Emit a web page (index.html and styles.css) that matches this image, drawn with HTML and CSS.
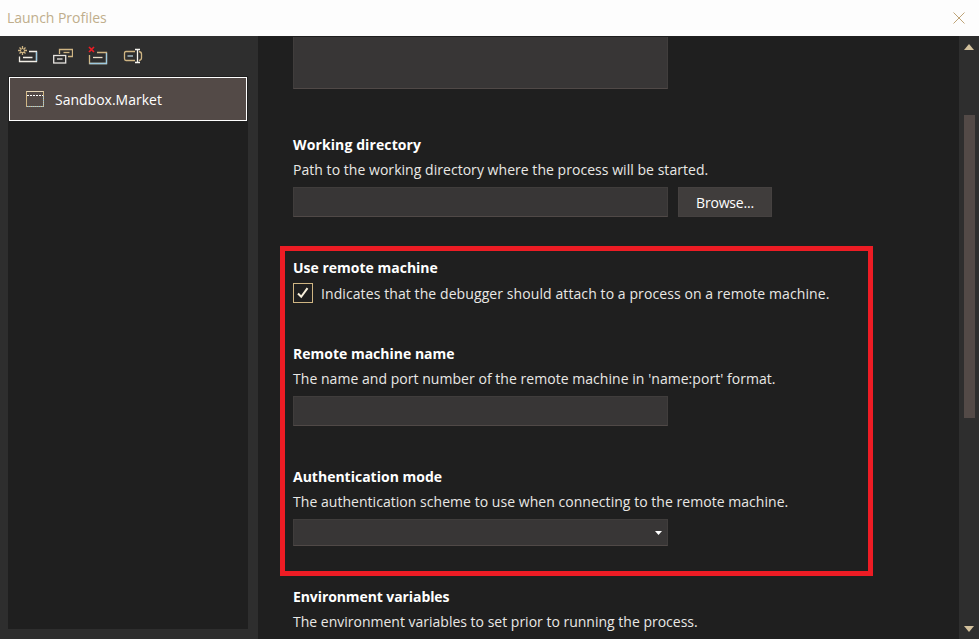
FILE: index.html
```html
<!DOCTYPE html>
<html lang="en">
<head>
<meta charset="utf-8">
<title>Launch Profiles</title>
<link rel="stylesheet" href="styles.css">
</head>
<body>
<div class="window">
  <header class="titlebar">
    <span class="title">Launch Profiles</span>
    <svg class="close" width="12" height="12" viewBox="0 0 12 12"><path d="M.5 .5l11 11M11.5 .5l-11 11"/></svg>
  </header>
  <div class="content">
    <aside class="sidebar">
      <div class="toolbar">
        <svg class="icon" width="20" height="20" viewBox="0 0 20 20"><path d="M11 5.500H18.500V15.500H1.500V10.500M5 11.500H14.500" stroke="#f2eee6"/><path d="M18.500 6V15" stroke="#9dc9e0"/><path d="M4.500 0V9M0 4.500H9M1.500 1.500L7.500 7.500M7.500 1.500L1.500 7.500" stroke="#cfb583"/><circle cx="4.500" cy="4.500" r="1.500" fill="#2e2e2e"/></svg>
        <svg class="icon" width="20" height="20" viewBox="0 0 20 20"><path d="M6.500 8V3.500H19.500V10.500H15" stroke="#cfb583"/><path d="M10.500 6.500H16.500" stroke="#cfb583"/><rect x=".7" y="9.500" width="12" height="7.500" stroke="#e6e3df"/><path d="M4 13H9.500" stroke="#e6e3df"/></svg>
        <svg class="icon" width="20" height="20" viewBox="0 0 20 20"><path d="M9 6.500H18.500V17.500H1.500V9" stroke="#cfb583"/><path d="M18.500 7V17.500H1.500" stroke="#9dc9e0"/><path d="M5 11.500H14.500" stroke="#e6ddc9"/><path d="M1 1L6 6M6 1L1 6" stroke="#ed1c24" stroke-width="1.700"/></svg>
        <svg class="icon" width="20" height="20" viewBox="0 0 20 20"><path d="M12 5.500H3Q1.500 5.500 1.500 7.500V12.500Q1.500 14.500 3 14.500H12M16 5.500Q18.500 6 18.500 8V12Q18.500 14 16 14.500" stroke="#cfb583"/><path d="M4.500 10H10" stroke="#b8d3df"/><path d="M14.500 3.500V16.500M12 3.500H17M12 16.500H17" stroke="#f7f5f0"/></svg>
      </div>
      <div class="profiles">
        <div class="profile">
          <svg class="icon" width="19" height="17" viewBox="0 0 19 17"><rect x=".5" y=".5" width="17" height="15" stroke="#cfb583"/><path d="M.5 .5H17.500" stroke="#e5d6b8"/><path d="M1 4.500H17" stroke="#fff" stroke-dasharray="2 1"/><path d="M17.500 5V15.500H1" stroke="#9dc9e0" stroke-dasharray="1 1"/></svg>
          <span class="profile-name">Sandbox.Market</span>
        </div>
      </div>
    </aside>
    <main class="settings">
      <div class="field arguments"></div>
      <section class="setting">
        <h2 class="t-wd">Working directory</h2>
        <p class="d-wd">Path to the working directory where the process will be started.</p>
        <div class="row"><div class="field"></div><button class="browse">Browse...</button></div>
      </section>
      <div class="highlight">
        <section class="setting">
          <h2>Use remote machine</h2>
          <label class="check-row"><span class="checkbox"><svg width="12" height="12" viewBox="0 0 12 12"><path d="M1 6.500L4.200 9.800L10.500 1.200"/></svg></span><span class="d-remote">Indicates that the debugger should attach to a process on a remote machine.</span></label>
        </section>
        <section class="setting">
          <h2>Remote machine name</h2>
          <p class="d-name">The name and port number of the remote machine in 'name:port' format.</p>
          <div class="field"></div>
        </section>
        <section class="setting">
          <h2>Authentication mode</h2>
          <p class="d-auth">The authentication scheme to use when connecting to the remote machine.</p>
          <div class="field select"><svg width="7" height="4" viewBox="0 0 7 4"><path d="M0 0H7L3.500 4Z"/></svg></div>
        </section>
      </div>
      <section class="setting">
        <h2 class="t-env">Environment variables</h2>
        <p>The environment variables to set prior to running the process.</p>
      </section>
    </main>
    <div class="scrollbar">
      <svg width="10" height="6" viewBox="0 0 10 6"><path d="M0 6L5 0L10 6Z"/></svg>
      <div class="thumb"></div>
      <svg width="10" height="6" viewBox="0 0 10 6"><path d="M0 0H10L5 6Z"/></svg>
    </div>
  </div>
</div>
</body>
</html>
```
FILE: styles.css
```css
* { box-sizing: border-box; }
body { margin: 0; overflow: hidden; font: 14px/20px "Open Sans", "Noto Sans", sans-serif; color: #e9e8e5; background: #1f1f1f; white-space: nowrap; }
.window { width: 979px; height: 639px; display: flex; flex-direction: column; }
.titlebar { height: 36px; flex: none; display: flex; align-items: center; justify-content: space-between; padding: 0 14px 1px 7px; background: #fdfdfd; color: #c0ae8c; }
.title { letter-spacing: -.03px; }
svg { display: block; flex: none; fill: none; }
.close { stroke: #bea478; }
.content { flex: 1; min-height: 0; display: flex; }
.sidebar { width: 258px; flex: none; display: flex; flex-direction: column; padding: 0 10px 10px 8px; background: #2e2e2e; }
.toolbar { height: 40px; flex: none; display: flex; gap: 15px; padding: 10px 0 0 10px; }
.toolbar .icon { stroke-width: 1.3; }
.profiles { flex: 1; background: #1f1f1f; padding: 1px 1px 0; }
.profile { height: 44px; display: flex; align-items: center; gap: 10px; padding-left: 16px; background: #534a47; border: 1px solid #fff; color: #fff; }
.profile-name { padding-top: 2px; }
.settings { flex: 1; min-width: 0; padding: 1px 0 0 35px; }
.field { width: 375px; height: 30px; flex: none; background: #383636; border: 1px solid #403d3c; border-bottom-color: #504947; }
.field.arguments { height: 52px; border-top: 0; margin-bottom: 46px; }
h2 { margin: 0 0 5px; font-size: 14px; line-height: 20px; font-weight: 700; color: #fff; }
.t-wd { letter-spacing: .11px; }
.t-env { letter-spacing: -.09px; }
p { margin: 0 0 7px; }
.d-wd, .d-name, .d-auth { letter-spacing: .04px; }
.d-remote { padding-top: 1px; letter-spacing: .09px; }
.row { display: flex; gap: 10px; }
.browse { width: 94px; height: 30px; padding: 2px 0 0; border: 1px solid #454140; background: #403d3c; color: #fff; font: inherit; letter-spacing: -.2px; }
.highlight { width: 593px; height: 330px; margin: 29px 0 11px -13px; border: 5px solid #ed1c24; padding: 7px 0 0 8px; display: flex; flex-direction: column; gap: 41px; }
.check-row { display: flex; gap: 8px; height: 20px; }
.checkbox { width: 20px; height: 20px; display: grid; place-items: center; border: 1px solid #cfb583; }
.checkbox svg { stroke: #f7efdb; stroke-width: 2; }
.select { height: 27px; display: flex; align-items: center; justify-content: flex-end; padding-right: 5px; }
.select svg { fill: #fff; }
.scrollbar { width: 20px; flex: none; display: flex; flex-direction: column; align-items: center; background: #2e2e2e; padding: 8px 0 7px; }
.scrollbar svg { fill: #d3c19d; }
.thumb { width: 11px; height: 303px; margin: 65px 0 auto; background: #534a47; }
```
